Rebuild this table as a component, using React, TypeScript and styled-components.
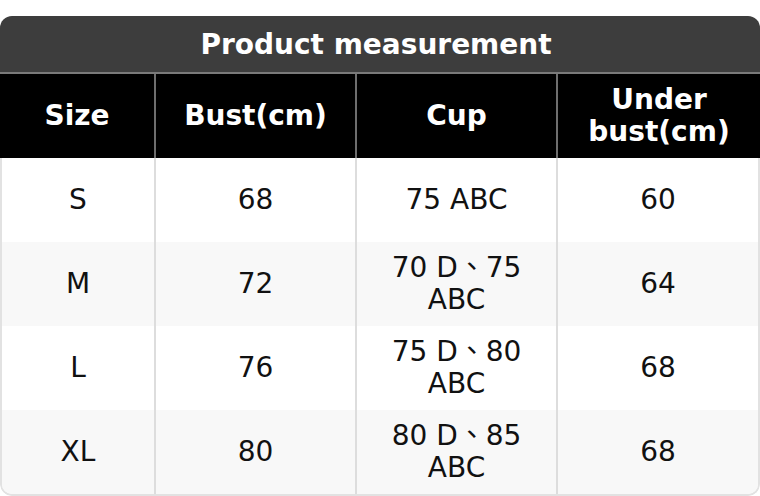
import React from "react";
import styled, { createGlobalStyle } from "styled-components";

const Global = createGlobalStyle`
  html, body { margin: 0; padding: 0; background: #ffffff; }
  body { font-family: "DejaVu Sans", "Noto Sans CJK TC", sans-serif; }
`;

const Card = styled.div`
  width: 760px;
  margin-top: 16px;
  border-radius: 12px;
  overflow: hidden;
`;

const TitleBar = styled.div`
  height: 56px;
  background: #3d3d3d;
  border-bottom: 2px solid #7a7a7a;
  display: flex;
  align-items: center;
  justify-content: center;
  padding-right: 8px;
  color: #ffffff;
  font-weight: 700;
  font-size: 28px;
`;

const HeadRow = styled.div`
  display: grid;
  grid-template-columns: 156px 201px 201px 202px;
  background: #000000;
`;

const HeadCell = styled.div<{ $last?: boolean }>`
  height: 84px;
  display: flex;
  align-items: center;
  justify-content: center;
  text-align: center;
  color: #ffffff;
  font-weight: 700;
  font-size: 28px;
  line-height: 32px;
  border-right: ${(p) => (p.$last ? "none" : "2px solid #6e6e6e")};
`;

const Body = styled.div`
  border: 2px solid #e2e2e2;
  border-top: none;
  border-radius: 0 0 12px 12px;
  overflow: hidden;
`;

const Row = styled.div<{ $alt?: boolean }>`
  display: grid;
  grid-template-columns: 154px 201px 201px 200px;
  background: ${(p) => (p.$alt ? "#f8f8f8" : "#ffffff")};
`;

const Cell = styled.div<{ $last?: boolean }>`
  height: 84px;
  display: flex;
  align-items: center;
  justify-content: center;
  text-align: center;
  color: #111111;
  font-size: 28px;
  line-height: 32px;
  padding: 0 12px;
  border-right: ${(p) => (p.$last ? "none" : "2px solid #dddddd")};
`;

const rows = [
  { size: "S", bust: "68", cup: "75 ABC", under: "60" },
  { size: "M", bust: "72", cup: "70 D、75 ABC", under: "64" },
  { size: "L", bust: "76", cup: "75 D、80 ABC", under: "68" },
  { size: "XL", bust: "80", cup: "80 D、85 ABC", under: "68" },
];

export default function App() {
  return (
    <>
      <Global />
      <Card>
        <TitleBar>Product measurement</TitleBar>
        <HeadRow>
          <HeadCell>Size</HeadCell>
          <HeadCell>Bust(cm)</HeadCell>
          <HeadCell>Cup</HeadCell>
          <HeadCell $last>
            Under
            <br />
            bust(cm)
          </HeadCell>
        </HeadRow>
        <Body>
          {rows.map((r, i) => (
            <Row key={r.size} $alt={i % 2 === 1}>
              <Cell>{r.size}</Cell>
              <Cell>{r.bust}</Cell>
              <Cell>{r.cup}</Cell>
              <Cell $last>{r.under}</Cell>
            </Row>
          ))}
        </Body>
      </Card>
    </>
  );
}
